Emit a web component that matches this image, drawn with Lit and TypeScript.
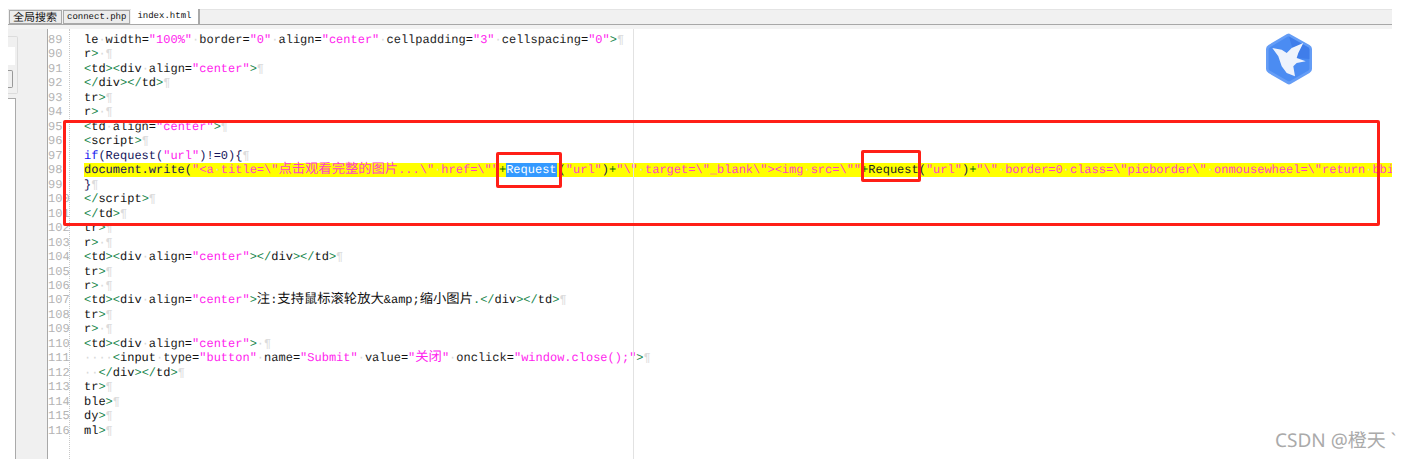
import { LitElement, html, css, svg } from "lit";
import { customElement } from "lit/decorators.js";

type Kind = "t" | "a" | "s" | "k" | "p" | "n" | "c" | "m";
type Seg = [Kind, string];

const W = (s: string): Seg => ["m", s];
const divOpen: Seg[] = [["t", "<"], ["n", "div"], W("·"), ["a", "align"], ["k", "="], ["s", '"center"'], ["t", ">"]];
const tdOpen: Seg[] = [["t", "<"], ["n", "td"], ["t", ">"]];
const divClose: Seg[] = [["t", "</"], ["n", "div"], ["t", ">"]];
const tdClose: Seg[] = [["t", "</"], ["n", "td"], ["t", ">"]];

const lines: { no: number; segs: Seg[]; mark?: boolean }[] = [
  { no: 89, segs: [["n", "le"], W("·"), ["a", "width"], ["k", "="], ["s", '"100%"'], W("·"), ["a", "border"], ["k", "="], ["s", '"0"'], W("·"), ["a", "align"], ["k", "="], ["s", '"center"'], W("·"), ["a", "cellpadding"], ["k", "="], ["s", '"3"'], W("·"), ["a", "cellspacing"], ["k", "="], ["s", '"0"'], ["t", ">"]] },
  { no: 90, segs: [["n", "r"], ["t", ">"], W("·")] },
  { no: 91, segs: [...tdOpen, ...divOpen] },
  { no: 92, segs: [...divClose, ...tdClose] },
  { no: 93, segs: [["n", "tr"], ["t", ">"]] },
  { no: 94, segs: [["n", "r"], ["t", ">"], W("·")] },
  { no: 95, segs: [["t", "<"], ["n", "td"], W("·"), ["a", "align"], ["k", "="], ["s", '"center"'], ["t", ">"]] },
  { no: 96, segs: [["t", "<"], ["n", "script"], ["t", ">"]] },
  { no: 97, segs: [["k", "if"], ["p", "(Request("], ["s", '"url"'], ["p", ")!=0){"]] },
  {
    no: 98,
    mark: true,
    segs: [
      ["p", "document.write("],
      ["s", '"<a'], W("·"), ["s", 'title=\\"点击观看完整的图片...\\"'], W("·"), ["s", 'href=\\""'],
      ["c", "+"], ["p", "@1"], ["p", "("], ["s", '"url"'], ["p", ")"], ["c", "+"],
      ["s", '"\\"'], W("·"), ["s", 'target=\\"_blank\\"><img'], W("·"), ["s", 'src=\\""'],
      ["c", "+"], ["p", "@2"], ["p", "("], ["s", '"url"'], ["p", ")"], ["c", "+"],
      ["s", '"\\"'], W("·"), ["s", "border=0"], W("·"), ["s", 'class=\\"picborder\\"'], W("·"), ["s", 'onmousewheel=\\"return'], W("·"), ["s", "bbi"],
    ],
  },
  { no: 99, segs: [["p", "}"]] },
  { no: 100, segs: [["t", "</"], ["n", "script"], ["t", ">"]] },
  { no: 101, segs: [...tdClose] },
  { no: 102, segs: [["n", "tr"], ["t", ">"]] },
  { no: 103, segs: [["n", "r"], ["t", ">"], W("·")] },
  { no: 104, segs: [...tdOpen, ...divOpen, ...divClose, ...tdClose] },
  { no: 105, segs: [["n", "tr"], ["t", ">"]] },
  { no: 106, segs: [["n", "r"], ["t", ">"], W("·")] },
  { no: 107, segs: [...tdOpen, ...divOpen, ["n", "注:支持鼠标滚轮放大&amp;缩小图片"], ["t", "."], ...divClose, ...tdClose] },
  { no: 108, segs: [["n", "tr"], ["t", ">"]] },
  { no: 109, segs: [["n", "r"], ["t", ">"], W("·")] },
  { no: 110, segs: [...tdOpen, ...divOpen, W("·")] },
  { no: 111, segs: [W("····"), ["t", "<"], ["n", "input"], W("·"), ["a", "type"], ["k", "="], ["s", '"button"'], W("·"), ["a", "name"], ["k", "="], ["s", '"Submit"'], W("·"), ["a", "value"], ["k", "="], ["s", '"关闭"'], W("·"), ["a", "onclick"], ["k", "="], ["s", '"window.close();"'], ["t", ">"]] },
  { no: 112, segs: [W("··"), ...divClose, ...tdClose] },
  { no: 113, segs: [["n", "tr"], ["t", ">"]] },
  { no: 114, segs: [["n", "ble"], ["t", ">"]] },
  { no: 115, segs: [["n", "dy"], ["t", ">"]] },
  { no: 116, segs: [["n", "ml"], ["t", ">"]] },
];

const bird = svg`<svg class="logo" viewBox="0 0 46 52" aria-hidden="true">
  <path d="M23 0.5 43.5 12Q46 13.4 46 16V36Q46 38.6 43.5 40L25 50.8Q23 52 21 50.8L2.5 40Q0 38.6 0 36V16Q0 13.4 2.5 12L21 1Q22 .5 23 .5Z" fill="#659df6"/>
  <path d="M23 3.5 42 14.2Q43.4 15 43.4 16.6V35.4Q43.4 37 42 37.8L24.2 48Q23 48.7 21.8 48L4 37.8Q2.6 37 2.6 35.4V16.6Q2.6 15 4 14.2L21.8 3.5Q23 3 23 3.5Z" fill="#4b8cf2"/>
  <path d="M23 3.5 42 14.2Q43.4 15 43.4 16.6V26L30 25 26 14Z" fill="#3f7dea"/>
  <path d="M6.3 15 15.7 16.7 20.7 20 25.7 15 37.3 10 32.3 20 30.7 25 39.7 28.3 30.7 30 27.3 33.3 29 43.3 20.7 40 15.7 33.3 12.3 23.3Z" fill="#eef3fc"/>
</svg>`;

const CJK = /([\u4e00-\u9fff]+)/;

@customElement("app-root")
export class AppRoot extends LitElement {
  static styles = css`
    :host {
      display: block;
      width: 1411px;
      height: 459px;
      position: relative;
      overflow: hidden;
      background: #fff;
      font-family: "Liberation Mono", "Noto Sans CJK SC", monospace;
      text-rendering: geometricPrecision;
    }
    .tabs {
      display: flex;
      align-items: stretch;
      box-sizing: border-box;
      height: 16px;
      margin: 9px 19px 0 8px;
      border-bottom: 1px solid #a8a8a8;
      background: #f1f1f1;
      border-top: 1px solid #e4e4e4;
    }
    .tab {
      display: flex;
      align-items: center;
      padding: 0 3px;
      border: 1px solid #a9a9a9;
      background: #ececec;
      color: #111;
      font-size: 9px;
      white-space: nowrap;
      margin-left: 1px;
    }
    .tab.first {
      font-family: "Noto Sans CJK SC", sans-serif;
      font-size: 11px;
      padding: 0 4px 0 3px;
    }
    .tab.on {
      background: #fff;
      margin-top: -1px;
      margin-left: 1px;
      padding: 0 7px 2px 6px;
      border-top: 0;
      border-bottom: 0;
      border-left: 0;
      border-right: 2px solid #a9a9a9;
    }
    .strip {
      height: 4px;
      margin: 0 19px 0 8px;
      background: #f3f3f3;
    }
    .main {
      display: flex;
      height: 430px;
      margin-right: 19px;
    }
    .side {
      width: 8px;
      flex: none;
    }
    .panel {
      width: 40px;
      flex: none;
      background: #f0f0f0;
      border-right: 1px solid #a8a8a8;
      display: flex;
      flex-direction: column;
      gap: 4px;
      padding-top: 7px;
      box-sizing: border-box;
    }
    .panel-top {
      width: 10px;
      height: 58px;
      border: 1px solid #dcdcdc;
      border-left: 0;
      border-radius: 0 2px 2px 0;
      box-sizing: border-box;
      padding-top: 10px;
    }
    .panel-field {
      width: 7px;
      height: 18px;
      background: #fff;
    }
    .panel-box {
      width: 5px;
      height: 18px;
      margin-top: 5px;
      border: 1px solid #999;
      border-left: 0;
      border-radius: 0 2px 2px 0;
      box-sizing: border-box;
    }
    .panel-low {
      width: 8px;
      flex: 1;
      background: #fff;
      border-right: 1px solid #aaa;
      border-top: 1px solid #aaa;
      box-sizing: border-box;
    }
    .gutter {
      width: 22px;
      flex: none;
      box-sizing: border-box;
      padding-top: 4px;
      border-right: 1px dotted #c8c8c8;
      color: #b4b4b4;
      font-size: 12px;
      line-height: 14.48px;
    }
    .gutter div {
      height: 14.48px;
      white-space: nowrap;
    }
    .code {
      flex: 1;
      min-width: 0;
      padding: 4px 0 0 14px;
      overflow: hidden;
      font-size: 12px;
      line-height: 14.48px;
      color: #111;
    }
    .row {
      height: 14.48px;
      white-space: pre;
    }
    .row.mark {
      background: linear-gradient(#ffff00, #ffff00) no-repeat 0 0 / 100% 14px;
    }
    .han { font-size: 13.3px; }
    .t { color: #16854a; }
    .n { color: #111; }
    .a { color: #1c1c1c; }
    .k { color: #111; }
    .s { color: #ff22ee; }
    .mark .s { color: #ff3fc8; }
    .p { color: #14145a; }
    .c { color: #0f6e0f; }
    .m { color: #d8d8d8; }
    .pil { color: #dcdcdc; }
    .sel { background: #3399ff; color: #fff; margin-right: 2px; }
    .hit { color: #222; }
    .kw { color: #1212ee; }
    .margin {
      position: absolute;
      left: 633px;
      top: 29px;
      bottom: 0;
      width: 1px;
      background: #e2e2e2;
    }
    .redbox {
      position: absolute;
      border: 3px solid #ff1f17;
      box-sizing: border-box;
      border-radius: 2px;
    }
    .big { left: 63px; top: 120px; width: 1317px; height: 106px; }
    .sm1 { left: 496px; top: 152px; width: 66px; height: 36px; }
    .sm2 { left: 861px; top: 150px; width: 60px; height: 32px; }
    .logo {
      position: absolute;
      left: 1266px;
      top: 33px;
      width: 46px;
      height: 52px;
    }
    .wm {
      position: absolute;
      right: 15px;
      top: 428px;
      font-family: "Noto Sans", "Noto Sans CJK SC", sans-serif;
      font-size: 19px;
      line-height: 24px;
      color: #aaa;
      white-space: nowrap;
    }
  `;

  private seg(s: Seg) {
    if (s[1] === "@1") return html`<span class="sel">Request</span>`;
    if (s[1] === "@2") return html`<span class="hit">Request</span>`;
    if (s[0] === "k" && s[1] === "if") return html`<span class="kw">if</span>`;
    const parts = s[1].split(CJK);
    return html`<span class=${s[0]}>${parts.map((p, i) =>
      i % 2 ? html`<span class="han">${p}</span>` : p
    )}</span>`;
  }

  render() {
    return html`
      <div class="tabs">
        <div class="tab first">全局搜索</div>
        <div class="tab">connect.php</div>
        <div class="tab on">index.html</div>
      </div>
      <div class="strip"></div>
      <div class="main">
        <div class="side"></div>
        <div class="panel">
          <div class="panel-top">
            <div class="panel-field"></div>
            <div class="panel-box"></div>
          </div>
          <div class="panel-low"></div>
        </div>
        <div class="gutter">${lines.map((l) => html`<div>${l.no}</div>`)}</div>
        <div class="code">
          ${lines.map((l) =>
            l.mark
              ? html`<div class="row mark">${l.segs.map((s) => this.seg(s))}</div>`
              : html`<div class="row">${l.segs.map((s) => this.seg(s))}<span class="pil">¶</span></div>`
          )}
        </div>
      </div>
      <div class="margin"></div>
      <div class="redbox big"></div>
      <div class="redbox sm1"></div>
      <div class="redbox sm2"></div>
      ${bird}
      <div class="wm">CSDN @橙天 \`</div>
    `;
  }
}
